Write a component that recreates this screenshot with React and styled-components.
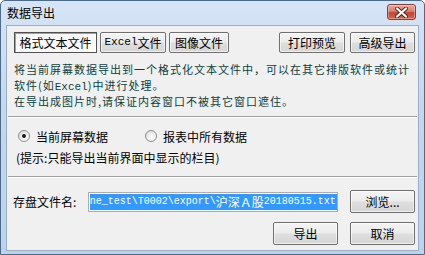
import React from "react";
import styled, { createGlobalStyle } from "styled-components";

const GlobalStyle = createGlobalStyle`
  html, body {
    margin: 0;
    padding: 0;
    background: #ffffff;
  }
  body {
    font-family: "Noto Sans CJK SC", "Liberation Sans", sans-serif;
    font-size: 12px;
  }
`;

const Window = styled.div`
  width: 425px;
  height: 255px;
  box-sizing: border-box;
  display: flex;
  flex-direction: column;
  border: 1px solid #4d6a88;
  border-radius: 5px 5px 0 0;
  background: linear-gradient(180deg, #d6e5f6 0%, #c4d8ef 40%, #bcd3ec 100%);
  padding: 0 5px 3px 5px;
  overflow: hidden;
`;

const TitleBar = styled.div`
  height: 24px;
  display: flex;
  align-items: center;
  justify-content: space-between;
  padding-left: 1px;
  padding-right: 3px;
`;

const Title = styled.div`
  font-size: 12px;
  color: #000;
  line-height: 14px;
  margin-top: -1px;
`;

const CloseButton = styled.div`
  width: 29px;
  height: 16px;
  margin-top: -2px;
  box-sizing: border-box;
  border: 1px solid #8b3b2f;
  border-radius: 3px;
  background: linear-gradient(180deg, #e9a99b 0%, #d8806e 45%, #c4432f 55%, #cf6a52 100%);
  display: flex;
  align-items: center;
  justify-content: center;
  box-shadow: inset 0 0 0 1px rgba(255, 255, 255, 0.35);
`;

const Client = styled.div`
  flex: 1;
  background: #f0f0f0;
  border: 1px solid #98aecb;
  display: flex;
  flex-direction: column;
  padding: 0 3px 4px 5px;
`;

const Toolbar = styled.div`
  margin-top: 6px;
  display: flex;
  align-items: center;
  padding-left: 2px;
`;

const Group = styled.div`
  display: flex;
  gap: ${(p) => p.$gap}px;
  margin-left: ${(p) => (p.$push ? "auto" : "0")};
`;

const Button = styled.button`
  width: ${(p) => p.$w}px;
  height: ${(p) => p.$h || 21}px;
  padding: 0;
  box-sizing: border-box;
  font-family: "Noto Sans CJK SC", "Liberation Sans", sans-serif;
  font-size: 12px;
  color: #000;
  border: 1px solid #707070;
  border-radius: 2px;
  background: linear-gradient(180deg, #f4f4f4 0%, #ececec 48%, #dedede 52%, #d6d6d6 100%);
  box-shadow: inset 0 0 0 1px rgba(255, 255, 255, 0.6);
  display: flex;
  align-items: center;
  justify-content: center;
  line-height: 1;
`;

const TabButton = styled(Button)`
  ${(p) =>
    p.$active &&
    `
    border: 1px solid #505050;
    border-radius: 0;
    background: #f9f9f9;
    box-shadow: inset 1px 1px 0 #a0a0a0, inset -1px -1px 0 #ffffff;
  `}
`;

const Mono = styled.span`
  font-family: "Liberation Mono", monospace;
  font-size: ${(p) => p.$size || 10}px;
  letter-spacing: 0;
`;

const Description = styled.div`
  margin-top: 8px;
  padding-left: 2px;
  color: #0b3f3f;
  font-size: 11px;
  letter-spacing: 1px;
  white-space: nowrap;
`;

const DescLine = styled.div`
  height: 16px;
  line-height: 16px;
`;

const Separator = styled.div`
  height: 1px;
  background: #a0a0a0;
  border-bottom: 1px solid #ffffff;
  margin-top: ${(p) => p.$top}px;
  margin-left: -4px;
  margin-right: -2px;
`;

const RadioRow = styled.div`
  margin-top: 10px;
  height: 16px;
  display: flex;
  align-items: center;
  padding-left: 6px;
`;

const RadioOption = styled.label`
  display: flex;
  align-items: center;
  gap: 6px;
  width: ${(p) => p.$w}px;
  color: #000;
`;

const RadioCircle = styled.span`
  width: 12px;
  height: 12px;
  box-sizing: border-box;
  border-radius: 50%;
  border: 1px solid #8e8f8f;
  background: radial-gradient(circle at 65% 70%, #ffffff 0%, #f2f2f2 40%, #cfcfcf 100%);
  display: flex;
  align-items: center;
  justify-content: center;
  &::after {
    content: "";
    width: 4px;
    height: 4px;
    border-radius: 50%;
    background: ${(p) => (p.$checked ? "#1a1a1a" : "transparent")};
  }
`;

const Hint = styled.div`
  margin-top: 6px;
  padding-left: 4px;
  line-height: 16px;
  color: #000;
`;

const FileRow = styled.div`
  margin-top: 12px;
  display: flex;
  align-items: center;
  height: 23px;
`;

const FileLabel = styled.div`
  width: 75px;
  padding-left: 1px;
  color: #000;
`;

const FileInput = styled.div`
  width: 251px;
  height: 20px;
  box-sizing: border-box;
  border: 1px solid #abadb3;
  background: #fff;
  display: flex;
  align-items: center;
  padding-left: 1px;
  overflow: hidden;
  white-space: nowrap;
`;

const Selected = styled.span`
  background: #3399ff;
  color: #fff;
  line-height: 16px;
  height: 16px;
  display: inline-flex;
  align-items: center;
  padding-right: 1px;
`;

const Wide = styled.span`
  font-family: "Noto Sans CJK SC", sans-serif;
  font-size: 12px;
`;

const Footer = styled.div`
  margin-top: 9px;
  display: flex;
  justify-content: flex-end;
  gap: 12px;
`;

const Spacer = styled.div`
  width: 12px;
`;

export default function App() {
  return (
    <>
      <GlobalStyle />
      <Window>
        <TitleBar>
          <Title>数据导出</Title>
          <CloseButton>
            <svg width="13" height="11" viewBox="0 0 13 11">
              <path
                d="M2 1.5 L11 9.5 M11 1.5 L2 9.5"
                stroke="#5a2218"
                strokeWidth="4"
                strokeLinecap="round"
              />
              <path
                d="M2 1.5 L11 9.5 M11 1.5 L2 9.5"
                stroke="#ffffff"
                strokeWidth="2.2"
                strokeLinecap="round"
              />
            </svg>
          </CloseButton>
        </TitleBar>
        <Client>
          <Toolbar>
            <Group $gap={3}>
              <TabButton $w={83} $active>
                格式文本文件
              </TabButton>
              <TabButton $w={66}>
                <Mono $size={11}>Excel</Mono>文件
              </TabButton>
              <TabButton $w={60}>图像文件</TabButton>
            </Group>
            <Group $gap={5} $push>
              <Button $w={66}>打印预览</Button>
              <Button $w={65}>高级导出</Button>
            </Group>
          </Toolbar>
          <Description>
            <DescLine>将当前屏幕数据导出到一个格式化文本文件中，可以在其它排版软件或统计</DescLine>
            <DescLine>
              软件(如<Mono $size={11}>Excel</Mono>)中进行处理。
            </DescLine>
            <DescLine>在导出成图片时,请保证内容窗口不被其它窗口遮住。</DescLine>
          </Description>
          <Separator $top={7} />
          <RadioRow>
            <RadioOption $w={127}>
              <RadioCircle $checked />
              当前屏幕数据
            </RadioOption>
            <RadioOption $w={120}>
              <RadioCircle />
              报表中所有数据
            </RadioOption>
          </RadioRow>
          <Hint>(提示:只能导出当前界面中显示的栏目)</Hint>
          <Separator $top={10} />
          <FileRow>
            <FileLabel>存盘文件名:</FileLabel>
            <FileInput>
              <Selected>
                <Mono>ne_test\T0002\export\</Mono>
                <Wide>沪深Ａ股</Wide>
                <Mono>20180515.txt</Mono>
              </Selected>
            </FileInput>
            <Spacer />
            <Button $w={65} $h={23}>
              浏览...
            </Button>
          </FileRow>
          <Footer>
            <Button $w={65} $h={23}>
              导出
            </Button>
            <Button $w={65} $h={23}>
              取消
            </Button>
          </Footer>
        </Client>
      </Window>
    </>
  );
}
